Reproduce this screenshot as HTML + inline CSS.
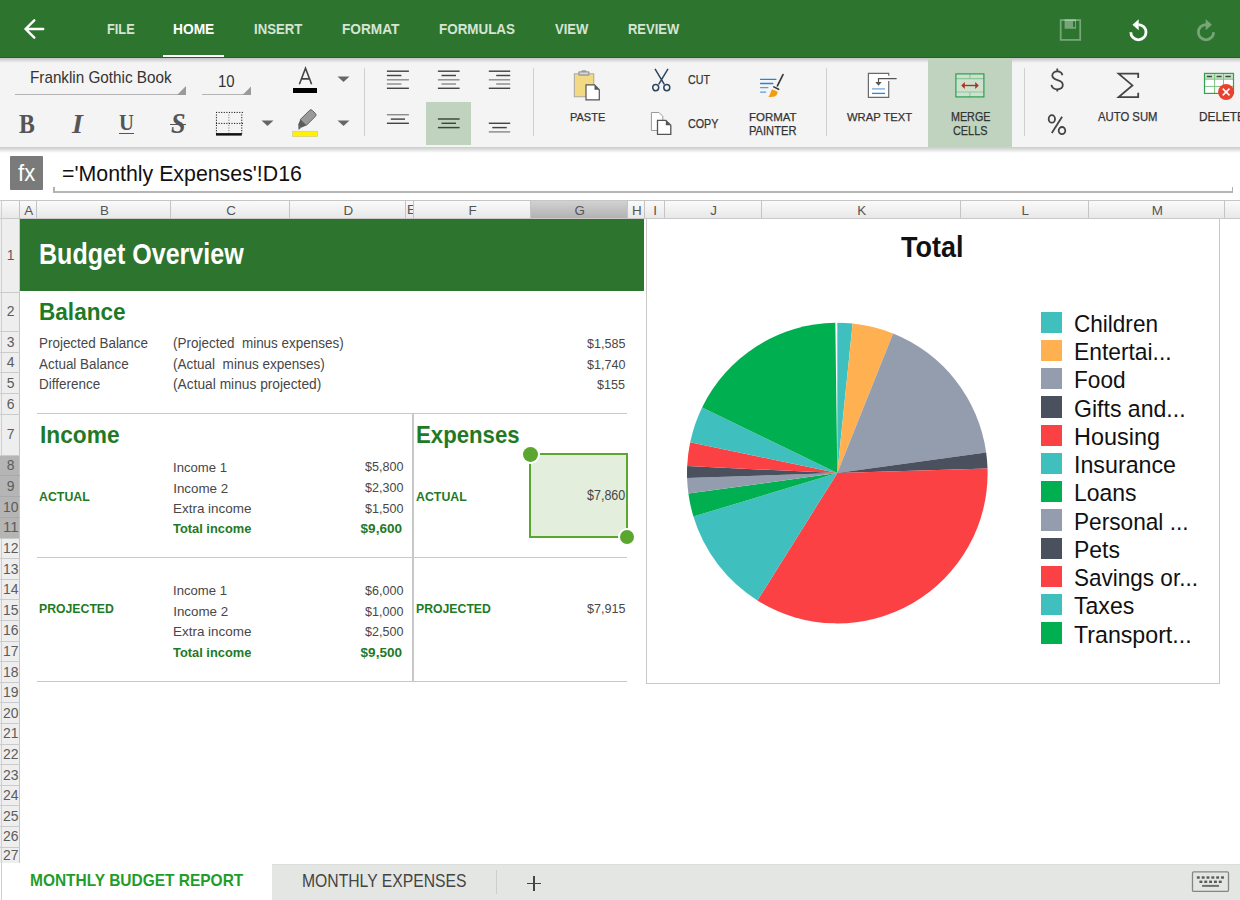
<!DOCTYPE html>
<html><head><meta charset="utf-8"><title>Budget</title>
<style>
html,body{margin:0;padding:0;width:1240px;height:900px;overflow:hidden;background:#fff;position:relative}
.b,.t{position:absolute}
.t{white-space:nowrap;font-family:"Liberation Sans",sans-serif}
</style></head><body>
<div class="b" style="left:0px;top:0px;width:1240px;height:57px;background:#2d752e"></div>
<div class="b" style="left:0px;top:57px;width:1240px;height:1px;background:#17691c"></div>
<div class="b" style="left:0px;top:58px;width:1240px;height:89px;background:#f4f4f4"></div>
<div class="b" style="left:0px;top:58px;width:1240px;height:5px;background:linear-gradient(#c4c4c4,rgba(244,244,244,0))"></div>
<div class="b" style="left:0px;top:146.6px;width:1240px;height:6px;background:linear-gradient(#cbcbcb,#d6d6d6 25%,rgba(255,255,255,0))"></div>
<svg class="b" style="left:0;top:0" width="60" height="58"><path d="M43.2 29 H26.5 M34.3 20.3 L25.6 29 L34.3 37.7" stroke="#fff" stroke-width="2.4" fill="none" stroke-linecap="round" stroke-linejoin="miter"/></svg>
<div class="t" style="left:107.00px;top:22.43px;font-size:14.97px;line-height:14.97px;font-weight:700;color:#d6e4d6;font-family:'Liberation Sans', sans-serif;transform:scaleX(0.8546);transform-origin:0 0;">FILE</div>
<div class="t" style="left:173.40px;top:22.43px;font-size:14.97px;line-height:14.97px;font-weight:700;color:#fff;font-family:'Liberation Sans', sans-serif;transform:scaleX(0.9196);transform-origin:0 0;">HOME</div>
<div class="t" style="left:253.70px;top:22.43px;font-size:14.97px;line-height:14.97px;font-weight:700;color:#d6e4d6;font-family:'Liberation Sans', sans-serif;transform:scaleX(0.8803);transform-origin:0 0;">INSERT</div>
<div class="t" style="left:342.00px;top:22.43px;font-size:14.97px;line-height:14.97px;font-weight:700;color:#d6e4d6;font-family:'Liberation Sans', sans-serif;transform:scaleX(0.9134);transform-origin:0 0;">FORMAT</div>
<div class="t" style="left:439.20px;top:22.43px;font-size:14.97px;line-height:14.97px;font-weight:700;color:#d6e4d6;font-family:'Liberation Sans', sans-serif;transform:scaleX(0.8961);transform-origin:0 0;">FORMULAS</div>
<div class="t" style="left:555.30px;top:22.43px;font-size:14.97px;line-height:14.97px;font-weight:700;color:#d6e4d6;font-family:'Liberation Sans', sans-serif;transform:scaleX(0.8732);transform-origin:0 0;">VIEW</div>
<div class="t" style="left:628.30px;top:22.43px;font-size:14.97px;line-height:14.97px;font-weight:700;color:#d6e4d6;font-family:'Liberation Sans', sans-serif;transform:scaleX(0.8669);transform-origin:0 0;">REVIEW</div>
<div class="b" style="left:163px;top:55px;width:61px;height:2px;background:#fff"></div>
<svg class="b" style="left:1050px;top:10px" width="190" height="40">
<rect x="10.7" y="10.1" width="19.5" height="19.8" fill="none" stroke="#fff" stroke-opacity="0.35" stroke-width="1.8"/>
<path d="M14.6 9.2 H26 V18.8 H14.6 Z M23 11.2 V17 H25 V11.2 Z" fill="#fff" fill-opacity="0.35" fill-rule="evenodd"/>
<path d="M88.4 14.6 A7.6 7.6 0 1 1 80.8 22.2" fill="none" stroke="#fff" stroke-width="2.8"/>
<path d="M82.5 14.8 L88.7 9.3 L88.7 20.3 Z" fill="#fff"/>
<g opacity="0.35"><path d="M156 14.6 A7.6 7.6 0 1 0 163.6 22.2" fill="none" stroke="#fff" stroke-width="2.8"/>
<path d="M161.9 14.8 L155.7 9.3 L155.7 20.3 Z" fill="#fff"/></g>
</svg>
<div class="t" style="left:29.90px;top:69.71px;font-size:15.70px;line-height:15.70px;font-weight:400;color:#333;font-family:'Liberation Sans', sans-serif;transform:scaleX(0.9722);transform-origin:0 0;">Franklin Gothic Book</div>
<div class="b" style="left:15px;top:94.2px;width:171px;height:1.2px;background:#b3b3b3"></div>
<svg class="b" style="left:176px;top:85px" width="12" height="12"><path d="M10 1 L10 10 L1 10 Z" fill="#9a9a9a"/></svg>
<div class="t" style="left:218.30px;top:72.90px;font-size:16.42px;line-height:16.42px;font-weight:400;color:#333;font-family:'Liberation Sans', sans-serif;transform:scaleX(0.9105);transform-origin:0 0;">10</div>
<div class="b" style="left:201.5px;top:94.2px;width:49.5px;height:1.2px;background:#b3b3b3"></div>
<svg class="b" style="left:241px;top:85px" width="12" height="12"><path d="M10 1.5 L10 10 L1.5 10 Z" fill="#9a9a9a"/></svg>
<svg class="b" style="left:290px;top:62px" width="30" height="26"><path d="M9.4 22.3 L15.5 6.2 L21.6 22.3 M11.6 16.9 H19.4" fill="none" stroke="#444" stroke-width="1.6" stroke-linejoin="miter"/></svg>
<div class="b" style="left:292.7px;top:87.6px;width:24.8px;height:5px;background:#000"></div>
<svg class="b" style="left:337px;top:76px" width="14" height="8"><path d="M0.5 0.5 L12.5 0.5 L6.5 6 Z" fill="#666"/></svg>
<svg class="b" style="left:261px;top:120px" width="14" height="8"><path d="M0.5 0.5 L12.5 0.5 L6.5 6 Z" fill="#666"/></svg>
<svg class="b" style="left:337px;top:120px" width="14" height="8"><path d="M0.5 0.5 L12.5 0.5 L6.5 6 Z" fill="#666"/></svg>
<svg class="b" style="left:290px;top:108px" width="32" height="32">
<g transform="translate(18.2 9.6) rotate(-45)">
<path d="M-7 -4.2 H6 Q8 -4.2 8 -2.2 V2.2 Q8 4.2 6 4.2 H-7 Z" fill="#9a9a9a" stroke="#5a5a5a" stroke-width="0.9"/>
<path d="M-7 -4.2 V4.2 L-12.2 2 V-2 Z" fill="#5a5a5a"/>
<path d="M-12.2 -2 V2 L-15.5 2 Z" fill="#5a5a5a"/>
</g>
<rect x="2.6" y="23.2" width="24.9" height="5.4" fill="#fff200" stroke="#cbc49a" stroke-width="0.6"/>
</svg>
<svg class="b" style="left:212px;top:108px" width="34" height="32"><g fill="#222"><rect x="4.00" y="3.9" width="1.1" height="1.1"/><rect x="4.00" y="14.9" width="1.1" height="1.1"/><rect x="6.58" y="3.9" width="1.1" height="1.1"/><rect x="6.58" y="14.9" width="1.1" height="1.1"/><rect x="9.16" y="3.9" width="1.1" height="1.1"/><rect x="9.16" y="14.9" width="1.1" height="1.1"/><rect x="11.74" y="3.9" width="1.1" height="1.1"/><rect x="11.74" y="14.9" width="1.1" height="1.1"/><rect x="14.32" y="3.9" width="1.1" height="1.1"/><rect x="14.32" y="14.9" width="1.1" height="1.1"/><rect x="16.90" y="3.9" width="1.1" height="1.1"/><rect x="16.90" y="14.9" width="1.1" height="1.1"/><rect x="19.48" y="3.9" width="1.1" height="1.1"/><rect x="19.48" y="14.9" width="1.1" height="1.1"/><rect x="22.06" y="3.9" width="1.1" height="1.1"/><rect x="22.06" y="14.9" width="1.1" height="1.1"/><rect x="24.64" y="3.9" width="1.1" height="1.1"/><rect x="24.64" y="14.9" width="1.1" height="1.1"/><rect x="27.22" y="3.9" width="1.1" height="1.1"/><rect x="27.22" y="14.9" width="1.1" height="1.1"/><rect x="29.80" y="3.9" width="1.1" height="1.1"/><rect x="29.80" y="14.9" width="1.1" height="1.1"/><rect x="3.9" y="6.50" width="1.1" height="1.1"/><rect x="29.2" y="6.50" width="1.1" height="1.1"/><rect x="16.3" y="6.50" width="1.1" height="1.1" fill="#888"/><rect x="3.9" y="9.10" width="1.1" height="1.1"/><rect x="29.2" y="9.10" width="1.1" height="1.1"/><rect x="16.3" y="9.10" width="1.1" height="1.1" fill="#888"/><rect x="3.9" y="11.70" width="1.1" height="1.1"/><rect x="29.2" y="11.70" width="1.1" height="1.1"/><rect x="16.3" y="11.70" width="1.1" height="1.1" fill="#888"/><rect x="3.9" y="14.30" width="1.1" height="1.1"/><rect x="29.2" y="14.30" width="1.1" height="1.1"/><rect x="16.3" y="14.30" width="1.1" height="1.1" fill="#888"/><rect x="3.9" y="16.90" width="1.1" height="1.1"/><rect x="29.2" y="16.90" width="1.1" height="1.1"/><rect x="16.3" y="16.90" width="1.1" height="1.1" fill="#888"/><rect x="3.9" y="19.50" width="1.1" height="1.1"/><rect x="29.2" y="19.50" width="1.1" height="1.1"/><rect x="16.3" y="19.50" width="1.1" height="1.1" fill="#888"/><rect x="3.9" y="22.10" width="1.1" height="1.1"/><rect x="29.2" y="22.10" width="1.1" height="1.1"/><rect x="16.3" y="22.10" width="1.1" height="1.1" fill="#888"/><rect x="3.9" y="24.70" width="1.1" height="1.1"/><rect x="29.2" y="24.70" width="1.1" height="1.1"/><rect x="16.3" y="24.70" width="1.1" height="1.1" fill="#888"/></g><rect x="4" y="25.1" width="25.8" height="2.5" fill="#111"/></svg>
<div class="t" style="left:18.70px;top:110.51px;font-size:26.56px;line-height:26.56px;font-weight:700;color:#555;font-family:'Liberation Serif', serif;transform:scaleX(0.8944);transform-origin:0 0;">B</div>
<div class="t" style="left:71.70px;top:110.51px;font-size:26.56px;line-height:26.56px;font-weight:700;color:#555;font-family:'Liberation Serif', serif;transform:scaleX(1.0617);transform-origin:0 0;font-style:italic;">I</div>
<div class="t" style="left:119.00px;top:112.17px;font-size:22.60px;line-height:22.60px;font-weight:700;color:#555;font-family:'Liberation Serif', serif;transform:scaleX(0.9159);transform-origin:0 0;">U</div>
<div class="b" style="left:118.8px;top:132.6px;width:15.6px;height:1.1px;background:#555"></div>
<div class="t" style="left:170.50px;top:110.16px;font-size:28.40px;line-height:28.40px;font-weight:700;color:#555;font-family:'Liberation Serif', serif;transform:scaleX(0.9200);transform-origin:0 0;font-style:italic;">S</div>
<div class="b" style="left:170px;top:123.7px;width:16px;height:1.2px;background:#555"></div>
<div class="b" style="left:364px;top:68px;width:1.3px;height:68px;background:#cfcfcf"></div>
<div class="b" style="left:533px;top:68px;width:1.3px;height:68px;background:#cfcfcf"></div>
<div class="b" style="left:825.5px;top:68px;width:1.3px;height:68px;background:#cfcfcf"></div>
<div class="b" style="left:1023.5px;top:68px;width:1.3px;height:68px;background:#cfcfcf"></div>
<div class="b" style="left:426.2px;top:101.7px;width:44.6px;height:43px;background:#c0d3bf"></div>
<svg class="b" style="left:0;top:0" width="560" height="150"><path d="M386.90 71.20 H408.90" stroke="#444444" stroke-width="1.45"/><path d="M386.90 75.50 H401.40" stroke="#444444" stroke-width="1.45"/><path d="M386.90 79.80 H408.90" stroke="#8c8c8c" stroke-width="1.45"/><path d="M386.90 84.00 H401.40" stroke="#8c8c8c" stroke-width="1.45"/><path d="M386.90 88.30 H408.90" stroke="#444444" stroke-width="1.45"/><path d="M437.90 71.20 H459.60" stroke="#444444" stroke-width="1.45"/><path d="M441.50 75.50 H456.00" stroke="#444444" stroke-width="1.45"/><path d="M437.90 79.80 H459.60" stroke="#8c8c8c" stroke-width="1.45"/><path d="M441.50 84.00 H456.00" stroke="#8c8c8c" stroke-width="1.45"/><path d="M437.90 88.30 H459.60" stroke="#444444" stroke-width="1.45"/><path d="M488.80 71.20 H510.20" stroke="#444444" stroke-width="1.45"/><path d="M496.20 75.50 H510.20" stroke="#444444" stroke-width="1.45"/><path d="M488.80 79.80 H510.20" stroke="#8c8c8c" stroke-width="1.45"/><path d="M496.20 84.00 H510.20" stroke="#8c8c8c" stroke-width="1.45"/><path d="M488.80 88.30 H510.20" stroke="#444444" stroke-width="1.45"/><path d="M386.90 114.70 H408.90" stroke="#8c8c8c" stroke-width="1.45"/><path d="M390.80 119.10 H405.00" stroke="#444444" stroke-width="1.45"/><path d="M386.90 123.30 H408.90" stroke="#444444" stroke-width="1.45"/><path d="M437.90 119.00 H459.60" stroke="#3a463a" stroke-width="1.45"/><path d="M441.50 123.30 H456.00" stroke="#3a463a" stroke-width="1.45"/><path d="M437.90 127.60 H459.60" stroke="#3a463a" stroke-width="1.45"/><path d="M488.80 123.30 H510.20" stroke="#444444" stroke-width="1.45"/><path d="M492.25 127.60 H506.75" stroke="#444444" stroke-width="1.45"/><path d="M488.80 131.90 H510.20" stroke="#8c8c8c" stroke-width="1.45"/></svg>
<svg class="b" style="left:570px;top:66px" width="34" height="36">
<rect x="4.3" y="7.8" width="19.5" height="23" fill="#f2da84" stroke="#a0a0a0" stroke-width="0.9"/>
<rect x="8.3" y="5.2" width="11.2" height="4.6" rx="1.2" fill="#9a9a9a"/>
<rect x="11.5" y="4.2" width="4.8" height="2" rx="0.8" fill="#9a9a9a"/>
<rect x="9.6" y="6.5" width="8.6" height="1.8" fill="#d8d8d8"/>
<path d="M16 18.9 H24.5 L29.3 23.7 V33.8 H16 Z" fill="#fff" stroke="#555" stroke-width="1.2"/>
<path d="M24.5 18.9 V23.7 H29.3 Z" fill="#555"/>
</svg>
<div class="t" style="left:569.60px;top:111.03px;font-size:11.77px;line-height:11.77px;font-weight:400;color:#333;font-family:'Liberation Sans', sans-serif;transform:scaleX(0.9355);transform-origin:0 0;-webkit-text-stroke:0.25px #333;font-weight:500;">PASTE</div>
<svg class="b" style="left:648px;top:66px" width="28" height="28">
<g fill="none" stroke="#2b4661" stroke-width="1.5">
<path d="M7 2.8 L16.3 18.3 M20 2.8 L10.7 18.3"/>
<ellipse cx="7.7" cy="21.6" rx="3" ry="3.2"/>
<ellipse cx="18.8" cy="21.6" rx="3" ry="3.2"/>
</g></svg>
<div class="t" style="left:688.20px;top:74.10px;font-size:12.65px;line-height:12.65px;font-weight:400;color:#333;font-family:'Liberation Sans', sans-serif;transform:scaleX(0.8428);transform-origin:0 0;-webkit-text-stroke:0.25px #333;">CUT</div>
<svg class="b" style="left:648px;top:109px" width="28" height="30">
<path d="M3.4 3.5 H11 L14.8 7.3 V21.5 H3.4 Z" fill="#fff" stroke="#9a9a9a" stroke-width="1"/>
<path d="M9.5 11.3 H17.8 L22.8 16.3 V25.3 H9.5 Z" fill="#fff" stroke="#555" stroke-width="1.3"/>
<path d="M17.8 11.3 V16.3 H22.8" fill="#555"/>
</svg>
<div class="t" style="left:688.20px;top:117.86px;font-size:12.21px;line-height:12.21px;font-weight:400;color:#333;font-family:'Liberation Sans', sans-serif;transform:scaleX(0.8783);transform-origin:0 0;-webkit-text-stroke:0.25px #333;">COPY</div>
<svg class="b" style="left:756px;top:70px" width="32" height="30">
<g stroke-width="1.4" stroke-linecap="round"><path d="M4.6 9.4 H19.8 M4.6 13.5 H16.8" stroke="#1f88d8"/><path d="M4.6 17.6 H11.8 M4.6 22.1 H9.6" stroke="#5c9bd9"/></g>
<path d="M27 4.6 L21.4 15.8" stroke="#3a3a3a" stroke-width="1.7" stroke-linecap="round"/>
<path d="M17.8 16.9 L22.6 19.3" stroke="#3a3a3a" stroke-width="1.6" stroke-linecap="round"/>
<path d="M16 19.4 Q19.5 19.9 21.8 21.9 Q21.3 25.3 18.7 26.6 Q15.2 27.3 12.3 26.8 Q14.3 24.8 14.7 22.3 Q15 20.2 16 19.4 Z" fill="#f19d12"/>
</svg>
<div class="t" style="left:748.70px;top:111.03px;font-size:11.77px;line-height:11.77px;font-weight:400;color:#333;font-family:'Liberation Sans', sans-serif;transform:scaleX(0.9722);transform-origin:0 0;-webkit-text-stroke:0.25px #333;">FORMAT</div>
<div class="t" style="left:748.70px;top:125.29px;font-size:12.06px;line-height:12.06px;font-weight:400;color:#333;font-family:'Liberation Sans', sans-serif;transform:scaleX(0.9243);transform-origin:0 0;-webkit-text-stroke:0.25px #333;">PAINTER</div>
<svg class="b" style="left:864px;top:70px" width="36" height="32">
<rect x="4.4" y="3.3" width="20.3" height="24.1" fill="#fff"/>
<path d="M24.7 5.8 V3.3 H4.4 V27.4 H24.7 V11" fill="none" stroke="#6a6a6a" stroke-width="1.2"/>
<path d="M32.6 8.6 H14.5 V13" fill="none" stroke="#555" stroke-width="1.2"/>
<path d="M11.3 12 L17.7 12 L14.5 15.7 Z" fill="#555"/>
<path d="M8 18.9 H21" stroke="#7ab0e4" stroke-width="1.4"/>
<path d="M8 23.4 H21" stroke="#2f86d8" stroke-width="1.3"/>
</svg>
<div class="t" style="left:846.80px;top:111.03px;font-size:11.77px;line-height:11.77px;font-weight:400;color:#333;font-family:'Liberation Sans', sans-serif;transform:scaleX(0.9548);transform-origin:0 0;-webkit-text-stroke:0.25px #333;">WRAP TEXT</div>
<div class="b" style="left:928.1px;top:58px;width:83.8px;height:88.6px;background:#c0d3bf"></div>
<svg class="b" style="left:950px;top:70px" width="40" height="32">
<rect x="5.9" y="3.9" width="28" height="23" fill="#cfe0cf"/>
<path d="M5.9 8.6 H33.9 M5.9 22 H33.9 M19.9 3.9 V8.6 M19.9 22 V26.9" stroke="#8cc79a" stroke-width="1.1"/>
<rect x="5.9" y="3.9" width="28" height="23" fill="none" stroke="#1a9c48" stroke-width="1.1"/>
<path d="M13.5 15.5 H26.5" stroke="#a63a1c" stroke-width="1.4"/>
<path d="M11.2 15.5 L14.8 12 V19 Z M28.8 15.5 L25.2 12 V19 Z" fill="#a63a1c"/>
</svg>
<div class="t" style="left:950.60px;top:110.56px;font-size:12.21px;line-height:12.21px;font-weight:400;color:#333;font-family:'Liberation Sans', sans-serif;transform:scaleX(0.8805);transform-origin:0 0;-webkit-text-stroke:0.25px #333;">MERGE</div>
<div class="t" style="left:953.00px;top:124.97px;font-size:12.79px;line-height:12.79px;font-weight:400;color:#333;font-family:'Liberation Sans', sans-serif;transform:scaleX(0.8509);transform-origin:0 0;-webkit-text-stroke:0.25px #333;">CELLS</div>
<svg class="b" style="left:1040px;top:64px" width="36" height="76"><g fill="none" stroke="#444" stroke-width="1.8">
<path d="M22.4 11.3 C21.9 8.8 20 7.4 17.3 7.4 C14.2 7.4 12.3 9.1 12.3 11.6 C12.3 14.3 14.6 15.3 17.6 16.1 C20.8 16.9 22.8 18.2 22.8 21.1 C22.8 23.8 20.5 25.3 17.3 25.3 C14.1 25.3 11.9 23.8 11.4 20.9"/>
<path d="M17.3 4.6 V7.4 M17.3 25.3 V27.5"/>
<ellipse cx="11.85" cy="54.95" rx="3.15" ry="3.75"/>
<ellipse cx="22" cy="66.55" rx="3.3" ry="3.55"/>
<path d="M22.1 52.8 L11.8 68.9"/></g></svg>
<svg class="b" style="left:1112px;top:68px" width="32" height="34">
<path d="M26.2 10 V5.7 H6.6 L20.4 17.4 L6.6 29.1 H26.2 V24.8" fill="none" stroke="#444" stroke-width="1.8" stroke-linejoin="miter" stroke-miterlimit="3"/>
</svg>
<div class="t" style="left:1098.00px;top:111.17px;font-size:12.79px;line-height:12.79px;font-weight:400;color:#333;font-family:'Liberation Sans', sans-serif;transform:scaleX(0.8844);transform-origin:0 0;-webkit-text-stroke:0.25px #333;">AUTO SUM</div>
<svg class="b" style="left:1200px;top:68px" width="40" height="36">
<rect x="4.5" y="5.4" width="29" height="20" fill="#fff"/>
<rect x="4.5" y="5.4" width="29" height="5.8" fill="#c8e4c8"/>
<path d="M4.5 11.2 H33.5 M4.5 18.4 H33.5 M14.6 5.4 V25.4 M23.5 5.4 V25.4" stroke="#7cc47f" stroke-width="1"/>
<rect x="4.5" y="5.4" width="29" height="20" fill="none" stroke="#2da44e" stroke-width="1.2"/>
<path d="M6.8 8.5 H12 M16.6 8.5 H21.6 M25.4 8.5 H30.8" stroke="#444" stroke-width="1.5"/>
<circle cx="26.1" cy="24" r="8" fill="#e8412f"/>
<path d="M22.7 20.6 L29.5 27.4 M29.5 20.6 L22.7 27.4" stroke="#fff" stroke-width="1.5"/>
</svg>
<div class="t" style="left:1198.70px;top:111.17px;font-size:12.79px;line-height:12.79px;font-weight:400;color:#333;font-family:'Liberation Sans', sans-serif;transform:scaleX(0.9245);transform-origin:0 0;-webkit-text-stroke:0.25px #333;">DELETE</div>
<div class="b" style="left:0px;top:152.6px;width:1240px;height:47.4px;background:#fff"></div>
<div class="b" style="left:10px;top:156.2px;width:33.3px;height:33.6px;background:#7a7a7a;border-radius:1px"></div>
<div class="t" style="left:17.6px;top:160.5px;font-size:24px;line-height:24px;color:#fff;font-family:'Liberation Sans',sans-serif;transform:scaleX(0.92);transform-origin:0 0">fx</div>
<div class="t" style="left:61.50px;top:162.74px;font-size:21.80px;line-height:21.80px;font-weight:400;color:#111;font-family:'Liberation Sans', sans-serif;transform:scaleX(0.9785);transform-origin:0 0;">='Monthly Expenses'!D16</div>
<div class="b" style="left:53px;top:191.3px;width:1180px;height:1.3px;background:#b5b5b5"></div>
<div class="b" style="left:53px;top:187px;width:1.5px;height:5px;background:#b0b0b0"></div>
<div class="b" style="left:1231.5px;top:187px;width:1.5px;height:5px;background:#b0b0b0"></div>
<div class="b" style="left:0px;top:200px;width:1240px;height:19px;background:linear-gradient(#fbfbfb,#e7e7e7)"></div>
<div class="b" style="left:0px;top:200px;width:1240px;height:1px;background:#c6c6c6"></div>
<div class="b" style="left:0px;top:218px;width:1240px;height:1px;background:#c9c9c9"></div>
<div class="b" style="left:530px;top:201px;width:97.7px;height:17px;background:linear-gradient(#d2d2d2,#b2b2b2)"></div>
<div class="b" style="left:1px;top:200px;width:1px;height:19px;background:#cfcfcf"></div>
<div class="b" style="left:19.0px;top:200px;width:1px;height:19px;background:#c4c4c4"></div>
<div class="b" style="left:36.0px;top:200px;width:1px;height:19px;background:#c4c4c4"></div>
<div class="b" style="left:170.2px;top:200px;width:1px;height:19px;background:#c4c4c4"></div>
<div class="b" style="left:289.1px;top:200px;width:1px;height:19px;background:#c4c4c4"></div>
<div class="b" style="left:405.0px;top:200px;width:1px;height:19px;background:#c4c4c4"></div>
<div class="b" style="left:412.9px;top:200px;width:1px;height:19px;background:#c4c4c4"></div>
<div class="b" style="left:529.5px;top:200px;width:1px;height:19px;background:#c4c4c4"></div>
<div class="b" style="left:627.2px;top:200px;width:1px;height:19px;background:#c4c4c4"></div>
<div class="b" style="left:643.9px;top:200px;width:1px;height:19px;background:#c4c4c4"></div>
<div class="b" style="left:663.9px;top:200px;width:1px;height:19px;background:#c4c4c4"></div>
<div class="b" style="left:760.5px;top:200px;width:1px;height:19px;background:#c4c4c4"></div>
<div class="b" style="left:960.1px;top:200px;width:1px;height:19px;background:#c4c4c4"></div>
<div class="b" style="left:1087.9px;top:200px;width:1px;height:19px;background:#c4c4c4"></div>
<div class="b" style="left:1224.2px;top:200px;width:1px;height:19px;background:#c4c4c4"></div>
<div class="b" style="left:0;top:201px;width:1240px;height:17px;overflow:hidden">
<div class="t" style="left:8.8px;top:2.6px;width:40px;text-align:center;font-size:13.4px;line-height:13.4px;color:#555;font-family:'Liberation Sans',sans-serif;">A</div>
<div class="t" style="left:84.4px;top:2.6px;width:40px;text-align:center;font-size:13.4px;line-height:13.4px;color:#555;font-family:'Liberation Sans',sans-serif;">B</div>
<div class="t" style="left:211.0px;top:2.6px;width:40px;text-align:center;font-size:13.4px;line-height:13.4px;color:#555;font-family:'Liberation Sans',sans-serif;">C</div>
<div class="t" style="left:328.4px;top:2.6px;width:40px;text-align:center;font-size:13.4px;line-height:13.4px;color:#555;font-family:'Liberation Sans',sans-serif;">D</div>
<div class="b" style="left:405.5px;top:0;width:7.9px;height:17px;overflow:hidden"><div class="t" style="left:1.6px;top:2.4px;font-size:13.4px;line-height:13.4px;color:#555">E</div></div>
<div class="t" style="left:452.5px;top:2.6px;width:40px;text-align:center;font-size:13.4px;line-height:13.4px;color:#555;font-family:'Liberation Sans',sans-serif;">F</div>
<div class="t" style="left:559.6px;top:2.6px;width:40px;text-align:center;font-size:13.4px;line-height:13.4px;color:#555;font-family:'Liberation Sans',sans-serif;">G</div>
<div class="t" style="left:616.8px;top:2.6px;width:40px;text-align:center;font-size:13.4px;line-height:13.4px;color:#555;font-family:'Liberation Sans',sans-serif;">H</div>
<div class="t" style="left:635.2px;top:2.6px;width:40px;text-align:center;font-size:13.4px;line-height:13.4px;color:#555;font-family:'Liberation Sans',sans-serif;">I</div>
<div class="t" style="left:693.5px;top:2.6px;width:40px;text-align:center;font-size:13.4px;line-height:13.4px;color:#555;font-family:'Liberation Sans',sans-serif;">J</div>
<div class="t" style="left:841.6px;top:2.6px;width:40px;text-align:center;font-size:13.4px;line-height:13.4px;color:#555;font-family:'Liberation Sans',sans-serif;">K</div>
<div class="t" style="left:1005.3px;top:2.6px;width:40px;text-align:center;font-size:13.4px;line-height:13.4px;color:#555;font-family:'Liberation Sans',sans-serif;">L</div>
<div class="t" style="left:1137.4px;top:2.6px;width:40px;text-align:center;font-size:13.4px;line-height:13.4px;color:#555;font-family:'Liberation Sans',sans-serif;">M</div>
</div>
<div class="b" style="left:0px;top:219px;width:20px;height:645px;background:#eeeeee"></div>
<div class="b" style="left:1px;top:219px;width:1px;height:645px;background:#cfcfcf"></div>
<div class="b" style="left:0px;top:455px;width:19.2px;height:83px;background:#b5b5b5"></div>
<div class="b" style="left:19.2px;top:219px;width:1px;height:645px;background:#c4c4c4"></div>
<div class="t" style="left:6.76px;top:249.34px;font-size:13.95px;line-height:13.95px;font-weight:400;color:#5c5c5c;font-family:'Liberation Sans', sans-serif;">1</div>
<div class="b" style="left:0px;top:291.6px;width:20px;height:1px;background:#cbcbcb"></div>
<div class="t" style="left:6.76px;top:305.49px;font-size:13.95px;line-height:13.95px;font-weight:400;color:#5c5c5c;font-family:'Liberation Sans', sans-serif;">2</div>
<div class="b" style="left:0px;top:330.8px;width:20px;height:1px;background:#cbcbcb"></div>
<div class="t" style="left:6.76px;top:335.59px;font-size:13.95px;line-height:13.95px;font-weight:400;color:#5c5c5c;font-family:'Liberation Sans', sans-serif;">3</div>
<div class="b" style="left:0px;top:351.8px;width:20px;height:1px;background:#cbcbcb"></div>
<div class="t" style="left:6.76px;top:356.19px;font-size:13.95px;line-height:13.95px;font-weight:400;color:#5c5c5c;font-family:'Liberation Sans', sans-serif;">4</div>
<div class="b" style="left:0px;top:372.0px;width:20px;height:1px;background:#cbcbcb"></div>
<div class="t" style="left:6.76px;top:376.79px;font-size:13.95px;line-height:13.95px;font-weight:400;color:#5c5c5c;font-family:'Liberation Sans', sans-serif;">5</div>
<div class="b" style="left:0px;top:393.0px;width:20px;height:1px;background:#cbcbcb"></div>
<div class="t" style="left:6.76px;top:397.69px;font-size:13.95px;line-height:13.95px;font-weight:400;color:#5c5c5c;font-family:'Liberation Sans', sans-serif;">6</div>
<div class="b" style="left:0px;top:413.8px;width:20px;height:1px;background:#cbcbcb"></div>
<div class="t" style="left:6.76px;top:428.44px;font-size:13.95px;line-height:13.95px;font-weight:400;color:#5c5c5c;font-family:'Liberation Sans', sans-serif;">7</div>
<div class="b" style="left:0px;top:454.5px;width:20px;height:1px;background:#cbcbcb"></div>
<div class="t" style="left:6.76px;top:459.04px;font-size:13.95px;line-height:13.95px;font-weight:400;color:#5c5c5c;font-family:'Liberation Sans', sans-serif;">8</div>
<div class="b" style="left:0px;top:475.0px;width:20px;height:1px;background:#a9a9a9"></div>
<div class="t" style="left:6.76px;top:479.79px;font-size:13.95px;line-height:13.95px;font-weight:400;color:#5c5c5c;font-family:'Liberation Sans', sans-serif;">9</div>
<div class="b" style="left:0px;top:496.0px;width:20px;height:1px;background:#a9a9a9"></div>
<div class="t" style="left:3.00px;top:500.64px;font-size:13.95px;line-height:13.95px;font-weight:400;color:#5c5c5c;font-family:'Liberation Sans', sans-serif;">10</div>
<div class="b" style="left:0px;top:516.7px;width:20px;height:1px;background:#a9a9a9"></div>
<div class="t" style="left:3.00px;top:521.39px;font-size:13.95px;line-height:13.95px;font-weight:400;color:#5c5c5c;font-family:'Liberation Sans', sans-serif;transform:scaleX(1.0681);transform-origin:0 0;">11</div>
<div class="b" style="left:0px;top:537.5px;width:20px;height:1px;background:#cbcbcb"></div>
<div class="t" style="left:3.00px;top:542.09px;font-size:13.95px;line-height:13.95px;font-weight:400;color:#5c5c5c;font-family:'Liberation Sans', sans-serif;">12</div>
<div class="b" style="left:0px;top:558.1px;width:20px;height:1px;background:#cbcbcb"></div>
<div class="t" style="left:3.00px;top:562.69px;font-size:13.95px;line-height:13.95px;font-weight:400;color:#5c5c5c;font-family:'Liberation Sans', sans-serif;">13</div>
<div class="b" style="left:0px;top:578.7px;width:20px;height:1px;background:#cbcbcb"></div>
<div class="t" style="left:3.00px;top:583.29px;font-size:13.95px;line-height:13.95px;font-weight:400;color:#5c5c5c;font-family:'Liberation Sans', sans-serif;">14</div>
<div class="b" style="left:0px;top:599.3px;width:20px;height:1px;background:#cbcbcb"></div>
<div class="t" style="left:3.00px;top:603.89px;font-size:13.95px;line-height:13.95px;font-weight:400;color:#5c5c5c;font-family:'Liberation Sans', sans-serif;">15</div>
<div class="b" style="left:0px;top:619.9px;width:20px;height:1px;background:#cbcbcb"></div>
<div class="t" style="left:3.00px;top:624.49px;font-size:13.95px;line-height:13.95px;font-weight:400;color:#5c5c5c;font-family:'Liberation Sans', sans-serif;">16</div>
<div class="b" style="left:0px;top:640.5px;width:20px;height:1px;background:#cbcbcb"></div>
<div class="t" style="left:3.00px;top:645.09px;font-size:13.95px;line-height:13.95px;font-weight:400;color:#5c5c5c;font-family:'Liberation Sans', sans-serif;">17</div>
<div class="b" style="left:0px;top:661.1px;width:20px;height:1px;background:#cbcbcb"></div>
<div class="t" style="left:3.00px;top:665.69px;font-size:13.95px;line-height:13.95px;font-weight:400;color:#5c5c5c;font-family:'Liberation Sans', sans-serif;">18</div>
<div class="b" style="left:0px;top:681.7px;width:20px;height:1px;background:#cbcbcb"></div>
<div class="t" style="left:3.00px;top:686.29px;font-size:13.95px;line-height:13.95px;font-weight:400;color:#5c5c5c;font-family:'Liberation Sans', sans-serif;">19</div>
<div class="b" style="left:0px;top:702.3px;width:20px;height:1px;background:#cbcbcb"></div>
<div class="t" style="left:3.00px;top:706.89px;font-size:13.95px;line-height:13.95px;font-weight:400;color:#5c5c5c;font-family:'Liberation Sans', sans-serif;">20</div>
<div class="b" style="left:0px;top:722.9px;width:20px;height:1px;background:#cbcbcb"></div>
<div class="t" style="left:3.00px;top:727.49px;font-size:13.95px;line-height:13.95px;font-weight:400;color:#5c5c5c;font-family:'Liberation Sans', sans-serif;">21</div>
<div class="b" style="left:0px;top:743.5px;width:20px;height:1px;background:#cbcbcb"></div>
<div class="t" style="left:3.00px;top:748.09px;font-size:13.95px;line-height:13.95px;font-weight:400;color:#5c5c5c;font-family:'Liberation Sans', sans-serif;">22</div>
<div class="b" style="left:0px;top:764.1px;width:20px;height:1px;background:#cbcbcb"></div>
<div class="t" style="left:3.00px;top:768.69px;font-size:13.95px;line-height:13.95px;font-weight:400;color:#5c5c5c;font-family:'Liberation Sans', sans-serif;">23</div>
<div class="b" style="left:0px;top:784.7px;width:20px;height:1px;background:#cbcbcb"></div>
<div class="t" style="left:3.00px;top:789.29px;font-size:13.95px;line-height:13.95px;font-weight:400;color:#5c5c5c;font-family:'Liberation Sans', sans-serif;">24</div>
<div class="b" style="left:0px;top:805.3px;width:20px;height:1px;background:#cbcbcb"></div>
<div class="t" style="left:3.00px;top:809.89px;font-size:13.95px;line-height:13.95px;font-weight:400;color:#5c5c5c;font-family:'Liberation Sans', sans-serif;">25</div>
<div class="b" style="left:0px;top:825.9px;width:20px;height:1px;background:#cbcbcb"></div>
<div class="t" style="left:3.00px;top:830.49px;font-size:13.95px;line-height:13.95px;font-weight:400;color:#5c5c5c;font-family:'Liberation Sans', sans-serif;">26</div>
<div class="b" style="left:0px;top:846.5px;width:20px;height:1px;background:#cbcbcb"></div>
<div class="t" style="left:3.00px;top:848.94px;font-size:13.95px;line-height:13.95px;font-weight:400;color:#5c5c5c;font-family:'Liberation Sans', sans-serif;">27</div>
<div class="b" style="left:20px;top:219px;width:624px;height:72px;background:#2d752e"></div>
<div class="t" style="left:39.40px;top:240.29px;font-size:29.07px;line-height:29.07px;font-weight:700;color:#fff;font-family:'Liberation Sans', sans-serif;transform:scaleX(0.8619);transform-origin:0 0;">Budget Overview</div>
<div class="t" style="left:39.40px;top:299.62px;font-size:23.84px;line-height:23.84px;font-weight:700;color:#1f7a26;font-family:'Liberation Sans', sans-serif;transform:scaleX(0.9473);transform-origin:0 0;">Balance</div>
<div class="t" style="left:39.30px;top:337.39px;font-size:13.95px;line-height:13.95px;font-weight:400;color:#474747;font-family:'Liberation Sans', sans-serif;transform:scaleX(0.9635);transform-origin:0 0;">Projected Balance</div>
<div class="t" style="left:173.00px;top:337.39px;font-size:13.95px;line-height:13.95px;font-weight:400;color:#474747;font-family:'Liberation Sans', sans-serif;transform:scaleX(0.9669);transform-origin:0 0;">(Projected&nbsp; minus expenses)</div>
<div class="t" style="left:39.30px;top:357.59px;font-size:13.95px;line-height:13.95px;font-weight:400;color:#474747;font-family:'Liberation Sans', sans-serif;transform:scaleX(0.9638);transform-origin:0 0;">Actual Balance</div>
<div class="t" style="left:173.00px;top:357.59px;font-size:13.95px;line-height:13.95px;font-weight:400;color:#474747;font-family:'Liberation Sans', sans-serif;transform:scaleX(0.9705);transform-origin:0 0;">(Actual&nbsp; minus expenses)</div>
<div class="t" style="left:39.30px;top:378.09px;font-size:13.95px;line-height:13.95px;font-weight:400;color:#474747;font-family:'Liberation Sans', sans-serif;transform:scaleX(0.9661);transform-origin:0 0;">Difference</div>
<div class="t" style="left:173.00px;top:378.09px;font-size:13.95px;line-height:13.95px;font-weight:400;color:#474747;font-family:'Liberation Sans', sans-serif;transform:scaleX(0.9868);transform-origin:0 0;">(Actual minus projected)</div>
<div class="t" style="left:586.80px;top:337.06px;font-size:13.52px;line-height:13.52px;font-weight:400;color:#474747;font-family:'Liberation Sans', sans-serif;transform:scaleX(0.9284);transform-origin:0 0;">$1,585</div>
<div class="t" style="left:586.80px;top:357.56px;font-size:13.52px;line-height:13.52px;font-weight:400;color:#474747;font-family:'Liberation Sans', sans-serif;transform:scaleX(0.9284);transform-origin:0 0;">$1,740</div>
<div class="t" style="left:597.20px;top:378.16px;font-size:13.52px;line-height:13.52px;font-weight:400;color:#474747;font-family:'Liberation Sans', sans-serif;transform:scaleX(0.9310);transform-origin:0 0;">$155</div>
<div class="b" style="left:36.5px;top:412.6px;width:590.3px;height:1.3px;background:#c8c8c8"></div>
<div class="b" style="left:36.5px;top:557px;width:590.3px;height:1.3px;background:#c8c8c8"></div>
<div class="b" style="left:36.5px;top:680.7px;width:590.3px;height:1.3px;background:#c8c8c8"></div>
<div class="b" style="left:412.2px;top:413px;width:1.4px;height:268px;background:#c8c8c8"></div>
<div class="t" style="left:40.00px;top:422.78px;font-size:24.71px;line-height:24.71px;font-weight:700;color:#1f7a26;font-family:'Liberation Sans', sans-serif;transform:scaleX(0.9193);transform-origin:0 0;">Income</div>
<div class="t" style="left:416.10px;top:422.78px;font-size:24.71px;line-height:24.71px;font-weight:700;color:#1f7a26;font-family:'Liberation Sans', sans-serif;transform:scaleX(0.8987);transform-origin:0 0;">Expenses</div>
<div class="t" style="left:39.20px;top:489.68px;font-size:13.37px;line-height:13.37px;font-weight:700;color:#1f7a26;font-family:'Liberation Sans', sans-serif;transform:scaleX(0.9243);transform-origin:0 0;">ACTUAL</div>
<div class="t" style="left:415.80px;top:489.68px;font-size:13.37px;line-height:13.37px;font-weight:700;color:#1f7a26;font-family:'Liberation Sans', sans-serif;transform:scaleX(0.9243);transform-origin:0 0;">ACTUAL</div>
<div class="t" style="left:173.20px;top:460.58px;font-size:13.37px;line-height:13.37px;font-weight:400;color:#474747;font-family:'Liberation Sans', sans-serif;transform:scaleX(0.9814);transform-origin:0 0;">Income 1</div>
<div class="t" style="left:364.50px;top:460.46px;font-size:13.52px;line-height:13.52px;font-weight:400;color:#474747;font-family:'Liberation Sans', sans-serif;transform:scaleX(0.9284);transform-origin:0 0;">$5,800</div>
<div class="t" style="left:173.20px;top:481.58px;font-size:13.37px;line-height:13.37px;font-weight:400;color:#474747;font-family:'Liberation Sans', sans-serif;">Income 2</div>
<div class="t" style="left:364.50px;top:481.46px;font-size:13.52px;line-height:13.52px;font-weight:400;color:#474747;font-family:'Liberation Sans', sans-serif;transform:scaleX(0.9284);transform-origin:0 0;">$2,300</div>
<div class="t" style="left:173.20px;top:502.08px;font-size:13.37px;line-height:13.37px;font-weight:400;color:#474747;font-family:'Liberation Sans', sans-serif;transform:scaleX(1.0061);transform-origin:0 0;">Extra income</div>
<div class="t" style="left:364.50px;top:501.96px;font-size:13.52px;line-height:13.52px;font-weight:400;color:#474747;font-family:'Liberation Sans', sans-serif;transform:scaleX(0.9284);transform-origin:0 0;">$1,500</div>
<div class="t" style="left:173.20px;top:522.38px;font-size:13.37px;line-height:13.37px;font-weight:700;color:#1f7a26;font-family:'Liberation Sans', sans-serif;transform:scaleX(0.9619);transform-origin:0 0;">Total income</div>
<div class="t" style="left:360.60px;top:522.26px;font-size:13.52px;line-height:13.52px;font-weight:700;color:#1f7a26;font-family:'Liberation Sans', sans-serif;">$9,600</div>
<div class="t" style="left:39.20px;top:602.48px;font-size:13.37px;line-height:13.37px;font-weight:700;color:#1f7a26;font-family:'Liberation Sans', sans-serif;transform:scaleX(0.9172);transform-origin:0 0;">PROJECTED</div>
<div class="t" style="left:415.80px;top:602.48px;font-size:13.37px;line-height:13.37px;font-weight:700;color:#1f7a26;font-family:'Liberation Sans', sans-serif;transform:scaleX(0.9172);transform-origin:0 0;">PROJECTED</div>
<div class="t" style="left:173.20px;top:584.18px;font-size:13.37px;line-height:13.37px;font-weight:400;color:#474747;font-family:'Liberation Sans', sans-serif;transform:scaleX(0.9814);transform-origin:0 0;">Income 1</div>
<div class="t" style="left:364.50px;top:584.06px;font-size:13.52px;line-height:13.52px;font-weight:400;color:#474747;font-family:'Liberation Sans', sans-serif;transform:scaleX(0.9284);transform-origin:0 0;">$6,000</div>
<div class="t" style="left:173.20px;top:604.98px;font-size:13.37px;line-height:13.37px;font-weight:400;color:#474747;font-family:'Liberation Sans', sans-serif;">Income 2</div>
<div class="t" style="left:364.50px;top:604.86px;font-size:13.52px;line-height:13.52px;font-weight:400;color:#474747;font-family:'Liberation Sans', sans-serif;transform:scaleX(0.9284);transform-origin:0 0;">$1,000</div>
<div class="t" style="left:173.20px;top:625.38px;font-size:13.37px;line-height:13.37px;font-weight:400;color:#474747;font-family:'Liberation Sans', sans-serif;transform:scaleX(1.0061);transform-origin:0 0;">Extra income</div>
<div class="t" style="left:364.50px;top:625.26px;font-size:13.52px;line-height:13.52px;font-weight:400;color:#474747;font-family:'Liberation Sans', sans-serif;transform:scaleX(0.9284);transform-origin:0 0;">$2,500</div>
<div class="t" style="left:173.20px;top:646.18px;font-size:13.37px;line-height:13.37px;font-weight:700;color:#1f7a26;font-family:'Liberation Sans', sans-serif;transform:scaleX(0.9619);transform-origin:0 0;">Total income</div>
<div class="t" style="left:360.60px;top:646.06px;font-size:13.52px;line-height:13.52px;font-weight:700;color:#1f7a26;font-family:'Liberation Sans', sans-serif;">$9,500</div>
<div class="t" style="left:586.80px;top:602.36px;font-size:13.52px;line-height:13.52px;font-weight:400;color:#474747;font-family:'Liberation Sans', sans-serif;transform:scaleX(0.9284);transform-origin:0 0;">$7,915</div>
<div class="b" style="left:529.3px;top:453.4px;width:99.1px;height:84.9px;background:#e3eedd;border:2.2px solid #5aa62e;box-sizing:border-box"></div>
<div class="t" style="left:586.80px;top:489.31px;font-size:13.81px;line-height:13.81px;font-weight:400;color:#474747;font-family:'Liberation Sans', sans-serif;transform:scaleX(0.9064);transform-origin:0 0;">$7,860</div>
<div class="b" style="left:522.9px;top:447.3px;width:14.8px;height:14.8px;border-radius:50%;background:#5aa62e;box-shadow:0 0 0 2px #fff"></div>
<div class="b" style="left:619.7px;top:529.6px;width:14.8px;height:14.8px;border-radius:50%;background:#5aa62e;box-shadow:0 0 0 2px #fff"></div>
<div class="b" style="left:645.8px;top:219px;width:574.6px;height:465px;background:#fff;border:1.4px solid #c8c8c8;border-top:none;box-sizing:border-box"></div>
<div class="t" style="left:901.00px;top:232.45px;font-size:29.94px;line-height:29.94px;font-weight:700;color:#111;font-family:'Liberation Sans', sans-serif;transform:scaleX(0.9002);transform-origin:0 0;">Total</div>
<svg class="b" style="left:0;top:0" width="1240" height="900"><path d="M837.3 473.1 L835.33 322.81 A150.3 150.3 0 0 1 837.30 322.80 Z" fill="#ffffff"/><path d="M837.3 473.1 L837.30 322.80 A150.3 150.3 0 0 1 852.62 323.58 Z" fill="#40bfbf"/><path d="M837.3 473.1 L852.62 323.58 A150.3 150.3 0 0 1 893.12 333.55 Z" fill="#ffb152"/><path d="M837.3 473.1 L893.12 333.55 A150.3 150.3 0 0 1 986.17 452.44 Z" fill="#939dae"/><path d="M837.3 473.1 L986.17 452.44 A150.3 150.3 0 0 1 987.53 468.38 Z" fill="#4a505e"/><path d="M837.3 473.1 L987.53 468.38 A150.3 150.3 0 0 1 757.43 600.42 Z" fill="#fb4143"/><path d="M837.3 473.1 L757.43 600.42 A150.3 150.3 0 0 1 693.41 516.54 Z" fill="#40bfbf"/><path d="M837.3 473.1 L693.41 516.54 A150.3 150.3 0 0 1 688.39 493.50 Z" fill="#00b050"/><path d="M837.3 473.1 L688.39 493.50 A150.3 150.3 0 0 1 687.08 478.08 Z" fill="#939dae"/><path d="M837.3 473.1 L687.08 478.08 A150.3 150.3 0 0 1 687.17 466.02 Z" fill="#4a505e"/><path d="M837.3 473.1 L687.17 466.02 A150.3 150.3 0 0 1 690.18 442.36 Z" fill="#fb4143"/><path d="M837.3 473.1 L690.18 442.36 A150.3 150.3 0 0 1 702.10 407.45 Z" fill="#40bfbf"/><path d="M837.3 473.1 L702.10 407.45 A150.3 150.3 0 0 1 835.33 322.81 Z" fill="#00b050"/></svg>
<div class="b" style="left:1041.1px;top:311.5px;width:21.3px;height:21.3px;background:#40bfbf"></div>
<div class="t" style="left:1074.20px;top:311.88px;font-size:24.71px;line-height:24.71px;font-weight:400;color:#111;font-family:'Liberation Sans', sans-serif;transform:scaleX(0.9126);transform-origin:0 0;">Children</div>
<div class="b" style="left:1041.1px;top:339.75px;width:21.3px;height:21.3px;background:#ffb152"></div>
<div class="t" style="left:1074.20px;top:340.13px;font-size:24.71px;line-height:24.71px;font-weight:400;color:#111;font-family:'Liberation Sans', sans-serif;transform:scaleX(0.9229);transform-origin:0 0;">Entertai...</div>
<div class="b" style="left:1041.1px;top:368.0px;width:21.3px;height:21.3px;background:#939dae"></div>
<div class="t" style="left:1074.20px;top:368.38px;font-size:24.71px;line-height:24.71px;font-weight:400;color:#111;font-family:'Liberation Sans', sans-serif;transform:scaleX(0.9159);transform-origin:0 0;">Food</div>
<div class="b" style="left:1041.1px;top:396.25px;width:21.3px;height:21.3px;background:#4a505e"></div>
<div class="t" style="left:1074.20px;top:396.63px;font-size:24.71px;line-height:24.71px;font-weight:400;color:#111;font-family:'Liberation Sans', sans-serif;transform:scaleX(0.9341);transform-origin:0 0;">Gifts and...</div>
<div class="b" style="left:1041.1px;top:424.5px;width:21.3px;height:21.3px;background:#fb4143"></div>
<div class="t" style="left:1074.20px;top:424.88px;font-size:24.71px;line-height:24.71px;font-weight:400;color:#111;font-family:'Liberation Sans', sans-serif;transform:scaleX(0.9484);transform-origin:0 0;">Housing</div>
<div class="b" style="left:1041.1px;top:452.75px;width:21.3px;height:21.3px;background:#40bfbf"></div>
<div class="t" style="left:1074.20px;top:453.13px;font-size:24.71px;line-height:24.71px;font-weight:400;color:#111;font-family:'Liberation Sans', sans-serif;transform:scaleX(0.9403);transform-origin:0 0;">Insurance</div>
<div class="b" style="left:1041.1px;top:481.0px;width:21.3px;height:21.3px;background:#00b050"></div>
<div class="t" style="left:1074.20px;top:481.38px;font-size:24.71px;line-height:24.71px;font-weight:400;color:#111;font-family:'Liberation Sans', sans-serif;transform:scaleX(0.9297);transform-origin:0 0;">Loans</div>
<div class="b" style="left:1041.1px;top:509.25px;width:21.3px;height:21.3px;background:#939dae"></div>
<div class="t" style="left:1074.20px;top:509.63px;font-size:24.71px;line-height:24.71px;font-weight:400;color:#111;font-family:'Liberation Sans', sans-serif;transform:scaleX(0.9166);transform-origin:0 0;">Personal ...</div>
<div class="b" style="left:1041.1px;top:537.5px;width:21.3px;height:21.3px;background:#4a505e"></div>
<div class="t" style="left:1074.20px;top:537.88px;font-size:24.71px;line-height:24.71px;font-weight:400;color:#111;font-family:'Liberation Sans', sans-serif;transform:scaleX(0.9308);transform-origin:0 0;">Pets</div>
<div class="b" style="left:1041.1px;top:565.75px;width:21.3px;height:21.3px;background:#fb4143"></div>
<div class="t" style="left:1074.20px;top:566.13px;font-size:24.71px;line-height:24.71px;font-weight:400;color:#111;font-family:'Liberation Sans', sans-serif;transform:scaleX(0.9116);transform-origin:0 0;">Savings or...</div>
<div class="b" style="left:1041.1px;top:594.0px;width:21.3px;height:21.3px;background:#40bfbf"></div>
<div class="t" style="left:1074.20px;top:594.38px;font-size:24.71px;line-height:24.71px;font-weight:400;color:#111;font-family:'Liberation Sans', sans-serif;transform:scaleX(0.9335);transform-origin:0 0;">Taxes</div>
<div class="b" style="left:1041.1px;top:622.25px;width:21.3px;height:21.3px;background:#00b050"></div>
<div class="t" style="left:1074.20px;top:622.63px;font-size:24.71px;line-height:24.71px;font-weight:400;color:#111;font-family:'Liberation Sans', sans-serif;transform:scaleX(0.9378);transform-origin:0 0;">Transport...</div>
<div class="b" style="left:0px;top:863.8px;width:1240px;height:37px;background:#e3e6e3"></div>
<div class="b" style="left:0px;top:863.8px;width:1240px;height:1.2px;background:#dcdedc"></div>
<div class="b" style="left:0px;top:863.3px;width:272px;height:37px;background:#fff"></div>
<div class="b" style="left:0.5px;top:863.3px;width:1.2px;height:37px;background:#cfcfcf"></div>
<div class="t" style="left:29.60px;top:872.67px;font-size:16.57px;line-height:16.57px;font-weight:700;color:#1f9d2a;font-family:'Liberation Sans', sans-serif;transform:scaleX(0.9346);transform-origin:0 0;">MONTHLY BUDGET REPORT</div>
<div class="t" style="left:302.40px;top:872.74px;font-size:17.44px;line-height:17.44px;font-weight:400;color:#444;font-family:'Liberation Sans', sans-serif;transform:scaleX(0.9012);transform-origin:0 0;">MONTHLY EXPENSES</div>
<div class="b" style="left:496.2px;top:869.6px;width:1px;height:24.8px;background:#cdcdcd"></div>
<div class="b" style="left:526.8px;top:882.6px;width:14.1px;height:1.6px;background:#444"></div>
<div class="b" style="left:533.1px;top:876.3px;width:1.6px;height:14.7px;background:#444"></div>
<svg class="b" style="left:1188px;top:868px" width="44" height="28"><rect x="4.5" y="3.8" width="36" height="19.6" rx="1.2" fill="none" stroke="#858585" stroke-width="1.3"/><g fill="#5a5a5a"><rect x="8.85" y="8.3" width="2.9" height="2.4"/><rect x="13.69" y="8.3" width="2.9" height="2.4"/><rect x="18.53" y="8.3" width="2.9" height="2.4"/><rect x="23.37" y="8.3" width="2.9" height="2.4"/><rect x="28.21" y="8.3" width="2.9" height="2.4"/><rect x="33.05" y="8.3" width="2.9" height="2.4"/><rect x="11.45" y="12.6" width="2.9" height="2.4"/><rect x="16.29" y="12.6" width="2.9" height="2.4"/><rect x="21.13" y="12.6" width="2.9" height="2.4"/><rect x="25.97" y="12.6" width="2.9" height="2.4"/><rect x="30.81" y="12.6" width="2.9" height="2.4"/><rect x="14.1" y="16.9" width="16.9" height="2" fill="#707070"/></g></svg>
</body></html>
